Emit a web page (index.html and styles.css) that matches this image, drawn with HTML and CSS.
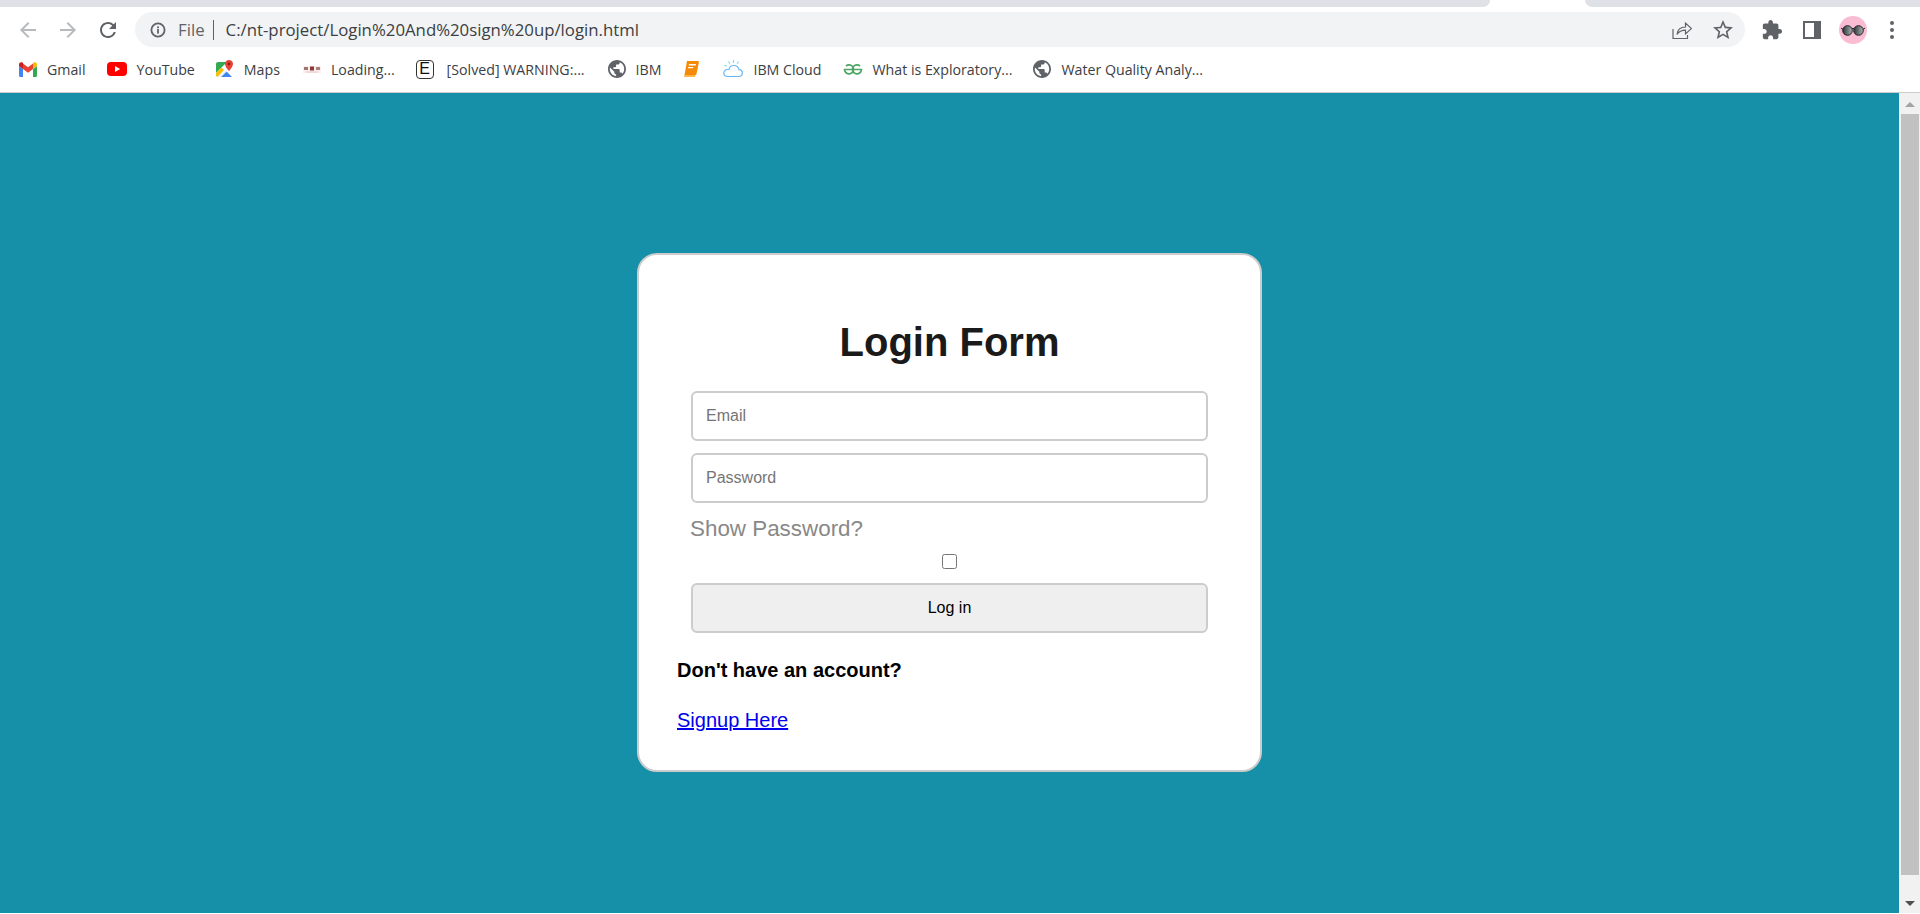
FILE: index.html
```html
<!DOCTYPE html>
<html lang="en">
<head>
  <meta charset="UTF-8">
  <title>Login Form</title>
  <link rel="stylesheet" href="styles.css">
</head>
<body>

  <!-- browser chrome -->
  <div class="tabstrip">
    <div class="tab-left"></div>
    <div class="tab-active"></div>
    <div class="tab-right"></div>
  </div>

  <div class="toolbar">
    <svg class="nav-icon faded" viewBox="0 0 24 24"><path d="M20 11H7.83l5.59-5.59L12 4l-8 8 8 8 1.41-1.41L7.83 13H20v-2z"/></svg>
    <svg class="nav-icon faded" viewBox="0 0 24 24"><path d="M12 4l-1.41 1.41L16.17 11H4v2h12.17l-5.58 5.59L12 20l8-8z"/></svg>
    <svg class="nav-icon" viewBox="0 0 24 24"><path d="M17.65 6.35A7.958 7.958 0 0 0 12 4c-4.42 0-7.99 3.58-7.99 8s3.57 8 7.99 8c3.73 0 6.84-2.55 7.73-6h-2.08A5.99 5.99 0 0 1 12 18c-3.31 0-6-2.69-6-6s2.69-6 6-6c1.66 0 3.14.69 4.22 1.78L13 11h7V4l-2.35 2.35z"/></svg>

    <div class="address">
      <svg class="info-icon" viewBox="0 0 16 16">
        <circle cx="8" cy="8" r="6.6" fill="none" stroke="#5f6368" stroke-width="1.8"/>
        <rect x="7.1" y="7" width="1.8" height="4.6" fill="#5f6368"/>
        <rect x="7.1" y="4.4" width="1.8" height="1.8" fill="#5f6368"/>
      </svg>
      <span class="scheme">File</span>
      <span class="divider"></span>
      <span class="url">C:/nt-project/Login%20And%20sign%20up/login.html</span>
      <svg class="share-icon" viewBox="0 0 20 20" fill="none" stroke="#5f6368" stroke-width="1.2">
        <path d="M1 9v9.5h14.5V15"/>
        <path d="M5 14.5c.5-4.5 3.5-7.5 8.5-7.5V3l6 5.5-6 5.5v-3.8c-3.5 0-6.5 1.3-8.5 4.3z"/>
      </svg>
      <svg class="star-icon" viewBox="0 0 24 24"><path fill="#5f6368" d="M22 9.24l-7.19-.62L12 2 9.19 8.63 2 9.24l5.46 4.73L5.82 21 12 17.27 18.18 21l-1.63-7.03L22 9.24zM12 15.4l-3.76 2.27 1-4.28-3.32-2.88 4.38-.38L12 6.1l1.71 4.04 4.38.38-3.32 2.88 1 4.28L12 15.4z"/></svg>
    </div>

    <svg class="puzzle-icon" viewBox="0 0 24 24"><path fill="#5f6368" d="M20.5 11H19V7c0-1.1-.9-2-2-2h-4V3.5C13 2.12 11.88 1 10.5 1S8 2.12 8 3.5V5H4c-1.1 0-1.99.9-1.99 2v3.8H3.5c1.49 0 2.7 1.21 2.7 2.7s-1.21 2.7-2.7 2.7H2V20c0 1.1.9 2 2 2h3.8v-1.5c0-1.49 1.21-2.7 2.7-2.7 1.49 0 2.7 1.21 2.7 2.7V22H17c1.1 0 2-.9 2-2v-4h1.5c1.38 0 2.5-1.12 2.5-2.5S21.88 11 20.5 11z"/></svg>
    <div class="panel-icon"></div>
    <div class="avatar">
      <svg viewBox="0 0 28 28" width="28" height="28">
        <defs>
          <linearGradient id="lens">
            <stop offset="0" stop-color="#2f3436"/>
            <stop offset="1" stop-color="#a9b4b6"/>
          </linearGradient>
        </defs>
        <circle cx="8.5" cy="14.5" r="4.8" fill="url(#lens)" stroke="#222" stroke-width="1"/>
        <circle cx="19.5" cy="14.5" r="4.8" fill="url(#lens)" stroke="#222" stroke-width="1"/>
        <path d="M13 12.5h2M2 12l2 1.5M26 12l-2 1.5" stroke="#222" stroke-width="1"/>
      </svg>
    </div>
    <div class="menu-dots"><i></i><i></i><i></i></div>
  </div>

  <div class="bookmarks">
    <div class="bookmark">
      <svg class="bm-icon" viewBox="0 0 18 18">
        <path fill="#4285f4" d="M0 6v9.5c0 .8.6 1.5 1.4 1.5H4V9z"/>
        <path fill="#34a853" d="M14 9v8h2.6c.8 0 1.4-.7 1.4-1.5V6z"/>
        <path fill="#ea4335" d="M4 9V3.5L9 7.2l5-3.7V9l-5 3.8z"/>
        <path fill="#c5221f" d="M0 6V4.4C0 2.5 2.1 1.5 3.5 2.6L4 3v6z"/>
        <path fill="#fbbc04" d="M18 6V4.4c0-1.9-2.1-2.9-3.5-1.8L14 3v6z"/>
      </svg>
      <span>Gmail</span>
    </div>
    <div class="bookmark">
      <svg class="bm-icon wide" viewBox="0 0 20 16">
        <rect y="1" width="20" height="14" rx="4" fill="#f00"/>
        <path fill="#fff" d="M8 5l5.2 3L8 11z"/>
      </svg>
      <span>YouTube</span>
    </div>
    <div class="bookmark">
      <svg class="bm-icon" viewBox="0 0 18 18">
        <path fill="#34a853" d="M2 2h9L0 13V4a2 2 0 0 1 2-2z"/>
        <path fill="#fbbc04" d="M0 13l5.5-5.5L8 10l-6.5 7C.6 16.7 0 16 0 15z"/>
        <path fill="#4285f4" d="M5 17l5.5-5.5L16 17z"/>
        <path fill="#f1f3f4" d="M1.5 17L15 4.5V7L4.5 17z"/>
        <path fill="#ea4335" d="M13 0c-2.2 0-4 1.7-4 3.9C9 6.5 13 11 13 11s4-4.5 4-7.1C17 1.7 15.2 0 13 0z"/>
        <circle cx="13" cy="3.9" r="1.4" fill="#8f1d16"/>
      </svg>
      <span>Maps</span>
    </div>
    <div class="bookmark loose">
      <svg class="bm-icon" viewBox="0 0 18 18">
        <rect y="6" width="18" height="7" fill="#fbeeee"/>
        <rect x="1" y="7" width="4" height="3" fill="#9c7672"/>
        <rect x="7" y="6.5" width="4" height="4" fill="#8c3a33"/>
        <rect x="13" y="7" width="4" height="3" fill="#a9827e"/>
        <rect x="3" y="11.5" width="12" height="1" fill="#e3c9c6"/>
      </svg>
      <span>Loading...</span>
    </div>
    <div class="bookmark">
      <div class="e-icon">E</div>
      <span>[Solved] WARNING:...</span>
    </div>
    <div class="bookmark loose">
      <svg class="bm-icon" viewBox="2 2 20 20"><path fill="#5f6368" d="M12 2C6.48 2 2 6.48 2 12s4.48 10 10 10 10-4.48 10-10S17.52 2 12 2zm-1 17.93c-3.95-.49-7-3.85-7-7.93 0-.62.08-1.21.21-1.79L9 15v1c0 1.1.9 2 2 2v1.93zm6.9-2.54c-.26-.81-1-1.39-1.9-1.39h-1v-3c0-.55-.45-1-1-1H8v-2h2c.55 0 1-.45 1-1V7h2c1.1 0 2-.9 2-2v-.41c2.93 1.19 5 4.06 5 7.41 0 2.08-.8 3.97-2.1 5.39z"/></svg>
      <span>IBM</span>
    </div>
    <div class="bookmark book-mark">
      <svg class="bm-icon" viewBox="0 0 18 18">
        <path fill="#f58a07" d="M5 1h11c.6 0 1 .5.9 1.1l-2.4 12c-.1.5-.5.9-1 .9H2.5z"/>
        <path fill="#fdb44b" d="M2.5 15h11l-.4 2H3c-1 0-1.5-1-.5-2z"/>
        <path fill="#fff" d="M7 4h7l-.3 1.5h-7zM6.3 7h5l-.3 1.3H6z"/>
      </svg>
    </div>
    <div class="bookmark">
      <svg class="bm-icon wide" viewBox="0 0 20 18" fill="none">
        <path stroke="#6ab7f5" stroke-width="1.2" d="M5 16.5h10.5c2.2 0 3.800-1.600 3.800-3.500s-1.500-3.300-3.300-3.400C15.500 7 13.500 5.500 11 5.500c-2.500 0-4.500 1.600-5 3.800C3 9 .8 10.800.8 13c0 2 1.800 3.500 4.200 3.500z"/>
        <path stroke="#7fdcea" stroke-width="1.2" d="M10.5 0v3M5.500 1.500l1.300 2.300M15.500 1.500l-1.300 2.300M1.500 5l2.300 1.300"/>
      </svg>
      <span>IBM Cloud</span>
    </div>
    <div class="bookmark">
      <svg class="bm-icon wide" viewBox="0 0 20 12" fill="none" stroke="#4ea565" stroke-width="1.7">
        <path d="M10 6.5h8.5A4.5 4.5 0 1 1 17 3"/>
        <path d="M10 6.5H1.5A4.5 4.5 0 1 0 3 3"/>
      </svg>
      <span>What is Exploratory...</span>
    </div>
    <div class="bookmark">
      <svg class="bm-icon" viewBox="2 2 20 20"><path fill="#5f6368" d="M12 2C6.48 2 2 6.48 2 12s4.48 10 10 10 10-4.48 10-10S17.52 2 12 2zm-1 17.93c-3.95-.49-7-3.85-7-7.93 0-.62.08-1.21.21-1.79L9 15v1c0 1.1.9 2 2 2v1.93zm6.9-2.54c-.26-.81-1-1.39-1.9-1.39h-1v-3c0-.55-.45-1-1-1H8v-2h2c.55 0 1-.45 1-1V7h2c1.1 0 2-.9 2-2v-.41c2.93 1.19 5 4.06 5 7.41 0 2.08-.8 3.97-2.1 5.39z"/></svg>
      <span>Water Quality Analy...</span>
    </div>
  </div>

  <!-- page -->
  <div class="viewport">
    <main class="page">
      <div class="card">
        <h1>Login Form</h1>
        <form class="login-form">
          <input class="field" type="email" placeholder="Email">
          <input class="field" type="password" placeholder="Password">
          <label class="show-label" for="showPassword">Show Password?</label>
          <input class="show-check" id="showPassword" type="checkbox">
          <button class="submit" type="button">Log in</button>
        </form>
        <p class="no-account">Don't have an account?</p>
        <p class="signup"><a href="#">Signup Here</a></p>
      </div>
    </main>
    <div class="scrollbar">
      <div class="arrow-up"></div>
      <div class="thumb"></div>
      <div class="arrow-down"></div>
    </div>
  </div>

</body>
</html>
```

FILE: styles.css
```css
* {
  box-sizing: border-box;
}
html, body {
  height: 100%;
}
body {
  margin: 0;
  display: flex;
  flex-direction: column;
  overflow: hidden;
  background: #fff;
  font-family: "Liberation Sans", Arial, sans-serif;
}

/* browser chrome */
.tabstrip {
  display: flex;
  height: 7px;
  flex: none;
}
.tab-left {
  flex: 1;
  background: #dee1e6;
  border-bottom-right-radius: 10px;
}
.tab-active {
  width: 95px;
}
.tab-right {
  width: 335px;
  background: #dee1e6;
  border-bottom-left-radius: 10px;
}
.toolbar {
  display: flex;
  align-items: center;
  height: 40px;
  flex: none;
  padding: 5px 0 0 16px;
}
.nav-icon {
  width: 24px;
  height: 24px;
  margin-right: 16px;
  fill: #5f6368;
}
.nav-icon.faded {
  fill: #b8babd;
}
.address {
  display: flex;
  align-items: center;
  width: 1610px;
  height: 35px;
  margin-left: -1px;
  padding: 0 12px 0 15px;
  border-radius: 18px;
  background: #f1f3f4;
  font-family: "Open Sans", sans-serif;
  font-size: 16.8px;
}
.info-icon {
  width: 16px;
  height: 16px;
  flex: none;
}
.scheme {
  margin-left: 12px;
  color: #5f6368;
}
.divider {
  width: 1px;
  height: 20px;
  margin: 0 12px 0 8px;
  background: #5f6368;
}
.url {
  flex: 1;
  color: #3c4043;
}
.share-icon {
  width: 20px;
  height: 20px;
  margin-right: 19px;
}
.star-icon {
  width: 24px;
  height: 24px;
  margin-right: -2px;
}
.puzzle-icon {
  width: 22px;
  height: 22px;
  margin-left: 16px;
}
.panel-icon {
  width: 18px;
  height: 18px;
  margin-left: 20px;
  border: 2.5px solid #5f6368;
  border-right-width: 7px;
  background: #fff;
}
.avatar {
  width: 28px;
  height: 28px;
  margin-left: 18px;
  border-radius: 50%;
  background: #f9bcd2;
}
.menu-dots {
  display: flex;
  flex-direction: column;
  gap: 3px;
  margin-left: 23px;
}
.menu-dots i {
  display: block;
  width: 4px;
  height: 4px;
  border-radius: 50%;
  background: #5f6368;
}
.bookmarks {
  display: flex;
  align-items: center;
  height: 46px;
  flex: none;
  padding: 0 0 1px 19px;
  border-bottom: 1px solid #ccc;
  gap: 21px;
  font-family: "Open Sans", sans-serif;
  font-size: 14.2px;
  color: #3c4043;
}
.bookmark {
  display: flex;
  align-items: center;
  gap: 10px;
}
.bookmark.loose {
  margin-left: 2px;
}
.bookmark.book-mark {
  margin-right: 2px;
}
.bm-icon {
  display: block;
  width: 18px;
  height: 18px;
  flex: none;
}
.bm-icon.wide {
  width: 20px;
}
.e-icon {
  width: 18px;
  height: 19px;
  margin-right: 3px;
  border: 1.5px solid #333;
  border-radius: 4px;
  font-family: "Liberation Sans", Arial, sans-serif;
  font-size: 16px;
  line-height: 16px;
  text-align: center;
  color: #111;
}

/* page */
.viewport {
  display: flex;
  flex: 1;
  min-height: 0;
  margin-bottom: 1px;
}
.page {
  flex: 1;
  display: flex;
  justify-content: center;
  align-items: flex-start;
  padding-top: 160px;
  background: #1690a8;
}
.card {
  width: 625px;
  padding: 38px;
  border: 2px solid #ccc;
  border-radius: 20px;
  background: #fff;
}
h1 {
  margin: 27px 0 26px;
  font-size: 40px;
  text-align: center;
  color: #1a1a1a;
}
.login-form {
  display: flex;
  flex-direction: column;
}
.field, .submit {
  width: 517px;
  height: 50px;
  margin: 0 auto;
  border: 2px solid #ccc;
  border-radius: 6px;
  font-family: "Liberation Sans", Arial, sans-serif;
  font-size: 16px;
}
.field {
  margin-bottom: 12px;
  padding: 0 13px;
  background: #fff;
}
.field::placeholder {
  color: #757575;
}
.show-label {
  margin: 1px 0 0 13px;
  font-size: 22.4px;
  color: #888;
}
.show-check {
  width: 15px;
  height: 15px;
  margin: 12px auto 14px;
}
.submit {
  background: #efefef;
  color: #000;
}
.no-account {
  margin: 26px 0 0;
  font-size: 20px;
  font-weight: bold;
  color: #000;
}
.signup {
  margin: 27px 0 0;
  font-size: 20px;
}
.signup a {
  color: #00e;
}
.scrollbar {
  display: flex;
  flex-direction: column;
  align-items: center;
  width: 21px;
  flex: none;
  padding: 0 1px;
  background: #f1f1f1;
}
.arrow-up, .arrow-down {
  width: 0;
  height: 0;
  flex: none;
  border-left: 5px solid transparent;
  border-right: 5px solid transparent;
}
.arrow-up {
  margin: 9px 0 7px;
  border-bottom: 5px solid #a3a3a3;
}
.thumb {
  width: 18px;
  flex: 1;
  background: #c1c1c1;
}
.arrow-down {
  margin: 26px 0 7px;
  border-top: 5px solid #505050;
}
```
